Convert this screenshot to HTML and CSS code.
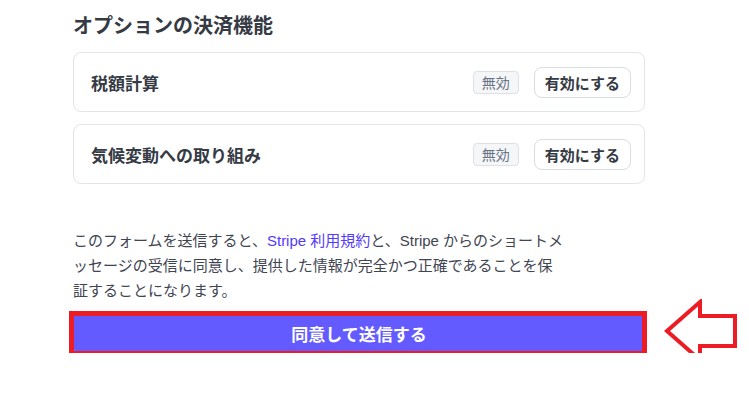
FILE: index.html
```html
<!DOCTYPE html>
<html lang="ja">
<head>
	<meta charset="UTF-8">
	<title>オプションの決済機能</title>
	<link rel="stylesheet" href="styles.css">
</head>
<body>
	<div class="page">
		<h2 class="section_title">オプションの決済機能</h2>
		<div class="feature_list">
			<div class="feature">
				<span class="feature_name">税額計算</span>
				<span class="badge">無効</span>
				<button class="btn_enable">有効にする</button>
			</div>
			<div class="feature">
				<span class="feature_name">気候変動への取り組み</span>
				<span class="badge">無効</span>
				<button class="btn_enable">有効にする</button>
			</div>
		</div>
		<p class="terms">このフォームを送信すると、<a href="#">Stripe 利用規約</a>と、Stripe からのショートメッセージの受信に同意し、提供した情報が完全かつ正確であることを保証することになります。</p>
		<div class="submit_wrap">
			<button class="submit">同意して送信する</button>
			<span class="mark_box"></span>
			<svg class="mark_arrow" width="76" height="66" viewBox="0 0 76 66">
				<polygon points="3,32 36,3 36,17 71,17 71,47 36,47 36,61" fill="#fff" stroke="#ed1c24" stroke-width="4" stroke-linejoin="miter"/>
			</svg>
		</div>
	</div>
</body>
</html>
```

FILE: styles.css
```css
html,body{
	margin:0;
	padding:0;
	background:#fff;
}
body{
	font-family:"Noto Sans","Noto Sans CJK JP",sans-serif;
	color:#414552;
}
.page{
	width:572px;
	margin-left:73px;
	padding-top:12px;
}
.section_title{
	margin:0 0 12px;
	font-size:20px;
	line-height:28px;
	font-weight:bold;
	color:#353a44;
}
.feature_list{
	display:flex;
	flex-direction:column;
	gap:12px;
}
.feature{
	display:flex;
	align-items:center;
	box-sizing:border-box;
	height:60px;
	padding:0 13px 0 17px;
	border:1px solid #e1e4e9;
	border-radius:8px;
}
.feature_name{
	flex:1;
	font-size:17px;
	font-weight:bold;
	color:#353a44;
}
.badge{
	box-sizing:border-box;
	height:23px;
	padding:0 8px;
	margin-right:15px;
	font-size:14px;
	line-height:21px;
	color:#687385;
	background:#f5f6f8;
	border:1px solid #dde1e6;
	border-radius:4px;
}
.btn_enable{
	box-sizing:border-box;
	height:31px;
	padding:0 10px;
	font-family:inherit;
	font-size:15px;
	font-weight:bold;
	color:#353a44;
	background:#fff;
	border:1px solid #d8dde3;
	border-radius:8px;
}
.terms{
	width:494px;
	margin:44px 0 0;
	font-family:"Liberation Sans","Noto Sans CJK JP",sans-serif;
	font-size:15px;
	line-height:25px;
}
.terms a{
	color:#533afd;
	text-decoration:none;
}
.submit_wrap{
	position:relative;
	margin-top:10px;
}
.submit{
	display:block;
	width:100%;
	height:40px;
	font-family:inherit;
	font-size:17px;
	font-weight:bold;
	color:#fff;
	background:#635bff;
	border:0;
	border-radius:6px;
}
.mark_box{
	position:absolute;
	top:-2px;
	left:-4px;
	right:-2px;
	bottom:-3px;
	border:5px solid #ed1c24;
}
.mark_arrow{
	position:absolute;
	left:591px;
	top:-14px;
}
```
